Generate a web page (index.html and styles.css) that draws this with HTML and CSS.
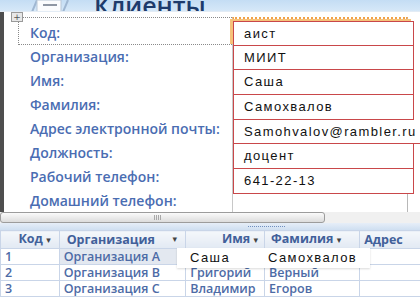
FILE: index.html
```html
<!DOCTYPE html>
<html lang="ru">
<head>
    <meta charset="UTF-8">
    <meta name="viewport" content="width=device-width, initial-scale=1.0">
    <title>Клиенты</title>
    <link rel="stylesheet" href="styles.css">
</head>
<body>
    <div class="titlebar">
        <svg class="form-icon" width="40" height="12" viewBox="0 0 40 12">
            <path d="M2 12 L7 0" stroke="#9fb7d2" stroke-width="2" fill="none"/>
            <rect x="7" y="0" width="24" height="12" fill="#fbfcfd" stroke="#b8c6d6"/>
            <path d="M13 5 H27" stroke="#6b7684" stroke-width="1.5"/>
            <path d="M33 12 L38 0" stroke="#9fb7d2" stroke-width="2" fill="none"/>
        </svg>
        <span class="title">Клиенты</span>
    </div>

    <div class="form">
        <div class="edge"></div>
        <div class="labels">
            <span class="handle">+</span>
            <div class="label current">Код:</div>
            <div class="label">Организация:</div>
            <div class="label">Имя:</div>
            <div class="label">Фамилия:</div>
            <div class="label">Адрес электронной почты:</div>
            <div class="label">Должность:</div>
            <div class="label">Рабочий телефон:</div>
            <div class="label">Домашний телефон:</div>
        </div>
        <div class="values">
            <div class="field first">аист</div>
            <div class="field">МИИТ</div>
            <div class="field">Саша</div>
            <div class="field">Самохвалов</div>
            <div class="field wide">Samohvalov@rambler.ru</div>
            <div class="field">доцент</div>
            <div class="field">641-22-13</div>
        </div>
    </div>

    <div class="hscroll">
        <div class="track"><span class="grip"></span></div>
    </div>
    <div class="splitter"><span class="dots"></span></div>

    <div class="sheet-wrap">
        <table class="sheet">
            <thead>
                <tr>
                    <th class="c-id">Код <span class="arrow">▾</span></th>
                    <th class="c-org">Организация <span class="arrow right">▾</span></th>
                    <th class="c-name">Имя <span class="arrow">▾</span></th>
                    <th class="c-last">Фамилия <span class="arrow">▾</span></th>
                    <th class="c-mail">Адрес</th>
                </tr>
            </thead>
            <tbody>
                <tr class="active">
                    <td>1</td><td class="hl">Организация А</td><td></td><td></td><td></td>
                </tr>
                <tr>
                    <td>2</td><td>Организация В</td><td>Григорий</td><td>Верный</td><td></td>
                </tr>
                <tr>
                    <td>3</td><td>Организация С</td><td>Владимир</td><td>Егоров</td><td></td>
                </tr>
                <tr>
                    <td></td><td></td><td></td><td></td><td></td>
                </tr>
            </tbody>
        </table>
        <div class="popup"><span class="p-name">Саша</span><span>Самохвалов</span></div>
    </div>
</body>
</html>
```

FILE: styles.css
```css
body {
    margin: 0;
    width: 420px;
    height: 297px;
    overflow: hidden;
    background-color: #fff;
    font-family: "Open Sans", "DejaVu Sans", sans-serif;
}
.titlebar {
    height: 12px;
    background: linear-gradient(#c4ddf4, #d6e8f8);
    display: flex;
    align-items: flex-end;
    overflow: hidden;
    border-bottom: 1px solid #e3ecf5;
    box-sizing: border-box;
}
.form-icon {
    margin-left: 30px;
    align-self: flex-start;
}
.title {
    margin-left: 24px;
    font-weight: 600;
    font-size: 25px;
    line-height: 24px;
    color: #1d3b6c;
    margin-bottom: -6px;
}
.form {
    display: flex;
    height: 200px;
}
.edge {
    width: 4px;
    background-color: #4e4e4e;
}
.labels {
    position: relative;
    width: 228px;
    padding-top: 5px;
    padding-left: 14px;
    box-sizing: border-box;
}
.handle {
    position: absolute;
    left: 7px;
    top: 0;
    width: 10px;
    height: 8px;
    border: 1px solid #9a9a9a;
    background: #e8e8e8;
    font-family: "DejaVu Sans", sans-serif;
    font-size: 9px;
    line-height: 8px;
    text-align: center;
    color: #555;
}
.label {
    height: 24px;
    line-height: 24px;
    padding-left: 12px;
    font-size: 14px;
    font-weight: 600;
    color: #4a6db2;
    white-space: nowrap;
}
.label.current {
    height: 28px;
    line-height: 30px;
    border-top: 1px dotted #8a8a8a;
    border-bottom: 1px dotted #8a8a8a;
    border-left: 1px dotted #8a8a8a;
    box-sizing: border-box;
    padding-left: 11px;
}
.values {
    width: 176px;
    margin-top: 5px;
    padding-top: 2px;
    border-top: 2px dotted #f0a24a;
    border-left: 1px solid #c8c8c8;
    border-right: 1px solid #b8b8b8;
    box-sizing: border-box;
}
.field {
    width: 181px;
    height: 24.7px;
    box-sizing: border-box;
    border: 1px solid #c9474a;
    border-top-width: 0;
    padding-left: 10px;
    font-family: "Liberation Sans", Arial, sans-serif;
    font-size: 13px;
    letter-spacing: 1.4px;
    line-height: 23px;
    color: #111;
    background-color: #fff;
    white-space: nowrap;
}
.field.first {
    border-top-width: 1px;
    box-shadow: -3px -2px 0 #f6c27a;
}
.field.wide {
    width: 200px;
}
.hscroll {
    height: 11px;
    background-color: #f0f0f0;
}
.track {
    width: 325px;
    height: 11px;
    box-sizing: border-box;
    border: 1px solid #9c9c9c;
    border-radius: 3px;
    background: linear-gradient(#fbfbfb, #dcdcdc);
    position: relative;
}
.grip {
    position: absolute;
    left: 153px;
    top: 2px;
    width: 8px;
    height: 5px;
    background: repeating-linear-gradient(90deg, #a8a8a8 0 1px, transparent 1px 2px);
}
.splitter {
    height: 7px;
    background: linear-gradient(#e6eef8, #cfdff1);
    display: flex;
    align-items: center;
    padding-left: 248px;
}
.dots {
    width: 38px;
    height: 1px;
    background: repeating-linear-gradient(90deg, #6f8fbf 0 1px, transparent 1px 2px);
}
.sheet-wrap {
    position: relative;
    height: 67px;
    overflow: hidden;
}
.sheet {
    border-collapse: collapse;
    table-layout: fixed;
    width: 430px;
    font-size: 12.5px;
    font-weight: 600;
    color: #4d6ba6;
}
.sheet th, .sheet td {
    border: 1px solid #c9d5e8;
    padding: 0 4px;
    white-space: nowrap;
    overflow: hidden;
    line-height: 15px;
}
.sheet th {
    height: 16px;
    background: linear-gradient(#f4f7fb, #e2e9f3);
    color: #41609a;
    text-align: left;
}
.sheet td {
    height: 15px;
}
.arrow {
    font-family: "DejaVu Sans", sans-serif;
    font-size: 9px;
    color: #444;
}
.arrow.right {
    float: right;
    margin-right: 4px;
}
.c-id { width: 45px; text-align: right !important; padding-right: 8px !important; }
.c-org { width: 113px; padding-left: 7px !important; }
.c-name { width: 67px; text-align: right !important; padding-right: 6px !important; }
.c-last { width: 83px; padding-left: 6px !important; }
.c-mail { width: 60px; }
.sheet tr.active td.hl {
    background-color: #e3e8f0;
}
.popup {
    position: absolute;
    left: 177px;
    top: 18px;
    width: 193px;
    height: 20px;
    background-color: #fff;
    box-shadow: 0 1px 2px rgba(0, 0, 0, 0.15);
    font-family: "Liberation Sans", Arial, sans-serif;
    font-size: 13px;
    letter-spacing: 1.4px;
    line-height: 20px;
    color: #111;
    display: flex;
}
.p-name {
    width: 78px;
    padding-left: 13px;
}
```
